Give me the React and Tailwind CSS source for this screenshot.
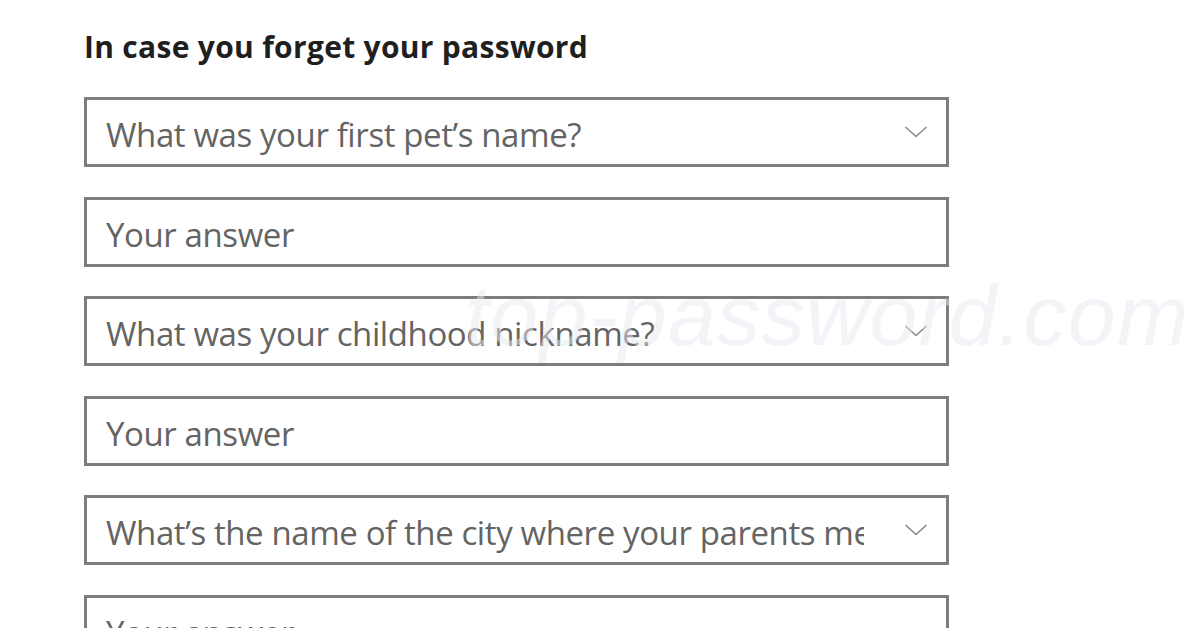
import React from 'react';

const rows = [
  { kind: 'select', text: 'What was your first pet\u2019s name?' },
  { kind: 'input', text: 'Your answer' },
  { kind: 'select', text: 'What was your childhood nickname?' },
  { kind: 'input', text: 'Your answer' },
  { kind: 'select', text: 'What\u2019s the name of the city where your parents met?' },
  { kind: 'input', text: 'Your answer' },
];

function Chevron() {
  return (
    <svg width="24" height="14" viewBox="0 0 24 14" fill="none" className="shrink-0">
      <path d="M1.5 2 L12 11.5 L22.5 2" stroke="#8a8a8a" strokeWidth="1.6" />
    </svg>
  );
}

export default function App() {
  return (
    <div className="relative w-[1196px] h-[628px] overflow-hidden bg-white font-['Open_Sans',sans-serif]">
      <div className="w-[865px] ml-[84px] pt-[29px]">
        <h2 className="text-[30px] leading-[36px] font-bold text-[#1f1f1f] tracking-[0.3px]">
          In case you forget your password
        </h2>
        <div className="mt-[32px] flex flex-col gap-[29.5px]">
          {rows.map((r, i) => (
            <div
              key={i}
              className="h-[70px] border-[3px] border-[#7d7d7d] bg-white flex items-center pt-[6px] pl-[19px] pr-[18px]"
            >
              <span className="flex-1 min-w-0 overflow-hidden whitespace-nowrap text-[33px] text-[#646464] tracking-[-0.4px]">
                {r.text}
              </span>
              {r.kind === 'select' && (
                <div className="pl-[40px] -mt-[6px]">
                  <Chevron />
                </div>
              )}
            </div>
          ))}
        </div>
      </div>
      <div className="pointer-events-none absolute left-[465px] top-[272px] leading-none text-[86px] italic text-[#e6eaf0]/50 tracking-[1.4px] font-['Liberation_Sans',sans-serif]">
        top-password.com
      </div>
    </div>
  );
}
